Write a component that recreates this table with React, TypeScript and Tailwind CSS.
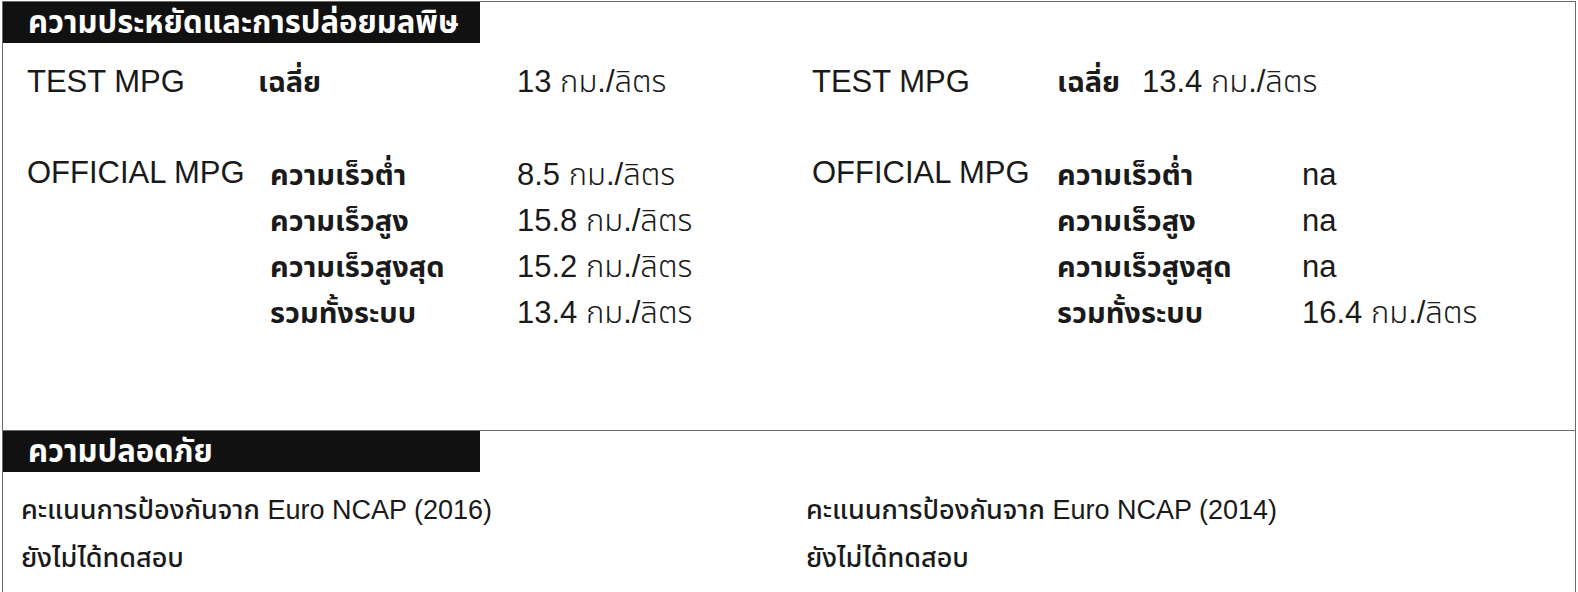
import React from 'react';

const font = "font-['Liberation_Sans','Noto_Sans_Thai','Noto_Sans',sans-serif]";

interface SpecRow {
  sub: string;
  value: string;
}

const SectionBar: React.FC<{ title: string }> = ({ title }) => (
  <div className="w-[477px] h-[41px] bg-[#111] flex items-center pl-[25px]">
    <span className="text-white text-[31px] font-bold leading-none">{title}</span>
  </div>
);

const MpgBlock: React.FC<{
  testValue: string;
  official: SpecRow[];
  testLabelW: string;
  labelW: string;
  testSubW: string;
  officialSubW: string;
}> = ({ testValue, official, testLabelW, labelW, testSubW, officialSubW }) => (
  <div className="flex flex-col">
    <div className="flex items-center h-[44px]">
      <div className={`${testLabelW} text-[31px] text-[#1a1a1a] leading-none`}>TEST MPG</div>
      <div className={`${testSubW} text-[29px] font-bold text-[#1a1a1a] leading-none pt-[3px]`}>เฉลี่ย</div>
      <div className="text-[31px] font-light text-[#1a1a1a] leading-none">{testValue}</div>
    </div>
    <div className="flex mt-[48px]">
      <div className={`${labelW} text-[31px] text-[#1a1a1a] leading-[44px]`}>OFFICIAL MPG</div>
      <div className="flex flex-col">
        {official.map((r) => (
          <div key={r.sub} className="flex items-center h-[46px]">
            <div className={`${officialSubW} text-[29px] font-bold text-[#1a1a1a] leading-none pt-[3px]`}>{r.sub}</div>
            <div className="text-[31px] font-light text-[#1a1a1a] leading-none">{r.value}</div>
          </div>
        ))}
      </div>
    </div>
  </div>
);

const SafetyBlock: React.FC<{ year: string }> = ({ year }) => (
  <div className="flex flex-col text-[#1a1a1a]">
    <div className="text-[27px] font-medium leading-[48px]">คะแนนการป้องกันจาก Euro NCAP ({year})</div>
    <div className="text-[27px] font-medium leading-[48px]">ยังไม่ได้ทดสอบ</div>
  </div>
);

export default function App() {
  return (
    <div className={`${font} w-[1578px] h-[592px] bg-white pt-[1px] px-[2px] overflow-hidden`}>
      <div className="h-full border-x border-t border-[#6b6b6b] flex flex-col">
        <div className="h-[428px] flex flex-col">
          <SectionBar title="ความประหยัดและการปล่อยมลพิษ" />
          <div className="grid grid-cols-[785px_1fr] pt-[16px]">
            <div className="pl-[24px]">
              <MpgBlock
                testValue="13 กม./ลิตร"
                testLabelW="w-[231px]"
                labelW="w-[243px]"
                testSubW="w-[259px]"
                officialSubW="w-[247px]"
                official={[
                  { sub: 'ความเร็วต่ำ', value: '8.5 กม./ลิตร' },
                  { sub: 'ความเร็วสูง', value: '15.8 กม./ลิตร' },
                  { sub: 'ความเร็วสูงสุด', value: '15.2 กม./ลิตร' },
                  { sub: 'รวมทั้งระบบ', value: '13.4 กม./ลิตร' },
                ]}
              />
            </div>
            <div className="pl-[24px]">
              <MpgBlock
                testValue="13.4 กม./ลิตร"
                testLabelW="w-[245px]"
                labelW="w-[245px]"
                testSubW="w-[85px]"
                officialSubW="w-[245px]"
                official={[
                  { sub: 'ความเร็วต่ำ', value: 'na' },
                  { sub: 'ความเร็วสูง', value: 'na' },
                  { sub: 'ความเร็วสูงสุด', value: 'na' },
                  { sub: 'รวมทั้งระบบ', value: '16.4 กม./ลิตร' },
                ]}
              />
            </div>
          </div>
        </div>
        <div className="flex-1 border-t border-[#6b6b6b] flex flex-col">
          <SectionBar title="ความปลอดภัย" />
          <div className="grid grid-cols-[785px_1fr] pt-[14px]">
            <div className="pl-[18px]">
              <SafetyBlock year="2016" />
            </div>
            <div className="pl-[18px]">
              <SafetyBlock year="2014" />
            </div>
          </div>
        </div>
      </div>
    </div>
  );
}
